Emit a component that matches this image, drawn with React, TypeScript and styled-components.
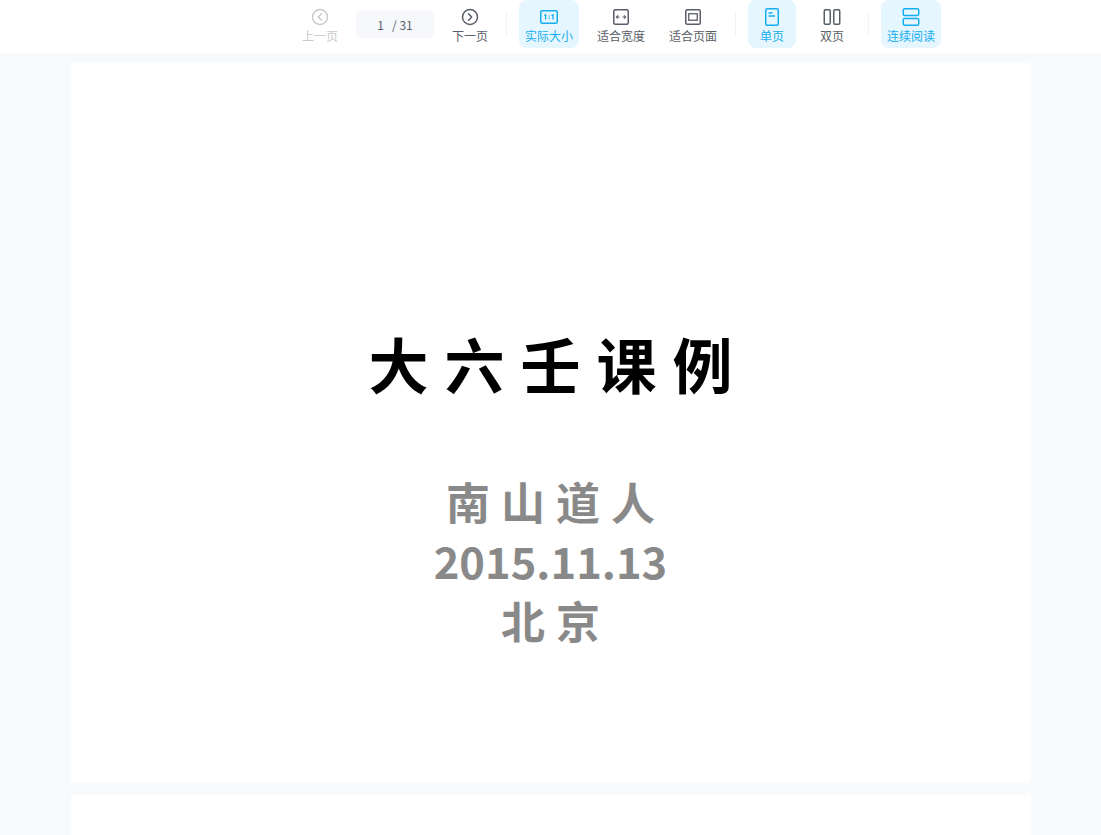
import React from 'react'
import styled, { createGlobalStyle } from 'styled-components'

const GlobalStyle = createGlobalStyle`
  html, body {
    margin: 0;
    padding: 0;
    height: 100%;
    overflow: hidden;
    background: #f8fafc;
    font-family: "Noto Sans CJK SC", "Noto Sans", sans-serif;
  }
`

const Viewer = styled.div`
  height: 100vh;
  overflow: hidden;
  display: flex;
  flex-direction: column;
`

const Toolbar = styled.div`
  flex: none;
  height: 53px;
  box-sizing: border-box;
  background: #fff;
  display: flex;
  align-items: flex-start;
  gap: 12px;
  padding-left: 296px;
`

const ToolButton = styled.div<{ $active?: boolean; $disabled?: boolean }>`
  min-width: 48px;
  height: 48px;
  box-sizing: border-box;
  padding: 7px 6px 0;
  border-radius: 8px;
  display: flex;
  flex-direction: column;
  align-items: center;
  background: ${(p) => (p.$active ? '#e6f6ff' : 'transparent')};
  color: ${(p) => (p.$active ? '#14aeee' : p.$disabled ? '#c8cacd' : '#5a5e68')};
  font-size: 12px;
  line-height: 16px;
  white-space: nowrap;

  svg {
    display: block;
    width: 20px;
    height: 20px;
    margin-bottom: 1px;
  }
`

const PageBox = styled.div`
  width: 78px;
  height: 27px;
  margin-top: 11px;
  border-radius: 4px;
  background: #f7f8fc;
  color: #5a5e68;
  font-size: 12px;
  line-height: 27px;
  text-align: center;
  white-space: pre;
`

const Divider = styled.div`
  width: 1px;
  height: 24px;
  margin-top: 12px;
  background: #f1f2f4;
`

const Pages = styled.div`
  flex: 1;
  display: flex;
  flex-direction: column;
  align-items: center;
  gap: 12px;
  padding-top: 10px;
`

const Sheet = styled.div`
  flex: none;
  width: 960px;
  height: 720px;
  box-sizing: border-box;
  padding-top: 260px;
  background: #fff;
  display: flex;
  flex-direction: column;
  align-items: center;
  font-weight: 700;
`

const Title = styled.div`
  font-size: 60px;
  line-height: 80px;
  letter-spacing: 16px;
  padding-left: 16px;
  color: #000;
`

const SubLines = styled.div`
  margin-top: 69px;
  display: flex;
  flex-direction: column;
  align-items: center;
  color: #898989;
  font-size: 44px;
  line-height: 59.5px;
`

const Spaced = styled.div`
  letter-spacing: 11px;
  padding-left: 11px;
`

const DateLine = styled.div`
  font-size: 43.5px;
  line-height: 57px;
  padding-bottom: 2.5px;
`

const PrevIcon = () => (
  <svg viewBox="0 0 20 20" fill="none" stroke="currentColor" strokeWidth="1.5">
    <circle cx="10" cy="10" r="7.5" />
    <path d="M11.5 6.8 8.3 10l3.2 3.2" strokeLinecap="round" strokeLinejoin="round" />
  </svg>
)

const NextIcon = () => (
  <svg viewBox="0 0 20 20" fill="none" stroke="currentColor" strokeWidth="1.5">
    <circle cx="10" cy="10" r="7.5" />
    <path d="M8.5 6.8 11.7 10l-3.2 3.2" strokeLinecap="round" strokeLinejoin="round" />
  </svg>
)

const ActualIcon = () => (
  <svg viewBox="0 0 20 20" fill="none" stroke="currentColor" strokeWidth="1.5">
    <rect x="1.75" y="3.75" width="16.5" height="12.5" rx="1.5" />
    <path d="M5.2 8.6 6.6 7.8v4.6M12.6 8.6l1.4-.8v4.6" strokeWidth="1.3" />
    <path d="M10.2 8.4v1.2M10.2 10.8V12" strokeWidth="1.3" />
  </svg>
)

const FitWidthIcon = () => (
  <svg viewBox="0 0 20 20" fill="none" stroke="currentColor" strokeWidth="1.5">
    <rect x="2.75" y="2.75" width="14.5" height="14.5" rx="1.5" />
    <path d="M5.4 10h3.2M11.4 10h3.2" strokeWidth="1.1" />
    <path d="M7 8.4 5.4 10 7 11.6M13 8.4l1.6 1.6-1.6 1.6" strokeWidth="1.1" />
  </svg>
)

const FitPageIcon = () => (
  <svg viewBox="0 0 20 20" fill="none" stroke="currentColor" strokeWidth="1.5">
    <rect x="2.75" y="2.75" width="14.5" height="14.5" rx="1.5" />
    <rect x="5.75" y="6.75" width="8.5" height="6.5" strokeWidth="1.3" />
  </svg>
)

const SingleIcon = () => (
  <svg viewBox="0 0 20 20" fill="none" stroke="currentColor" strokeWidth="1.5">
    <rect x="3.75" y="1.75" width="12.5" height="16.5" rx="1.5" />
    <path d="M6.5 6h4M6.5 9h6.5" strokeWidth="1.3" />
  </svg>
)

const DoubleIcon = () => (
  <svg viewBox="0 0 20 20" fill="none" stroke="currentColor" strokeWidth="1.5">
    <rect x="2.25" y="2.75" width="6" height="14.5" rx="1.2" />
    <rect x="11.75" y="2.75" width="6" height="14.5" rx="1.2" />
  </svg>
)

const ContinuousIcon = () => (
  <svg viewBox="0 0 20 20" fill="none" stroke="currentColor" strokeWidth="1.5">
    <rect x="2.25" y="1.75" width="15.5" height="6.8" rx="1.5" />
    <rect x="2.25" y="11.45" width="15.5" height="6.8" rx="1.5" />
  </svg>
)

export default function App() {
  return (
    <Viewer>
      <GlobalStyle />
      <Toolbar>
        <ToolButton $disabled>
          <PrevIcon />
          上一页
        </ToolButton>
        <PageBox>{'1   / 31'}</PageBox>
        <ToolButton>
          <NextIcon />
          下一页
        </ToolButton>
        <Divider />
        <ToolButton $active>
          <ActualIcon />
          实际大小
        </ToolButton>
        <ToolButton>
          <FitWidthIcon />
          适合宽度
        </ToolButton>
        <ToolButton>
          <FitPageIcon />
          适合页面
        </ToolButton>
        <Divider />
        <ToolButton $active>
          <SingleIcon />
          单页
        </ToolButton>
        <ToolButton>
          <DoubleIcon />
          双页
        </ToolButton>
        <Divider />
        <ToolButton $active>
          <ContinuousIcon />
          连续阅读
        </ToolButton>
      </Toolbar>
      <Pages>
        <Sheet>
          <Title>大六壬课例</Title>
          <SubLines>
            <Spaced>南山道人</Spaced>
            <DateLine>2015.11.13</DateLine>
            <Spaced>北京</Spaced>
          </SubLines>
        </Sheet>
        <Sheet />
      </Pages>
    </Viewer>
  )
}
